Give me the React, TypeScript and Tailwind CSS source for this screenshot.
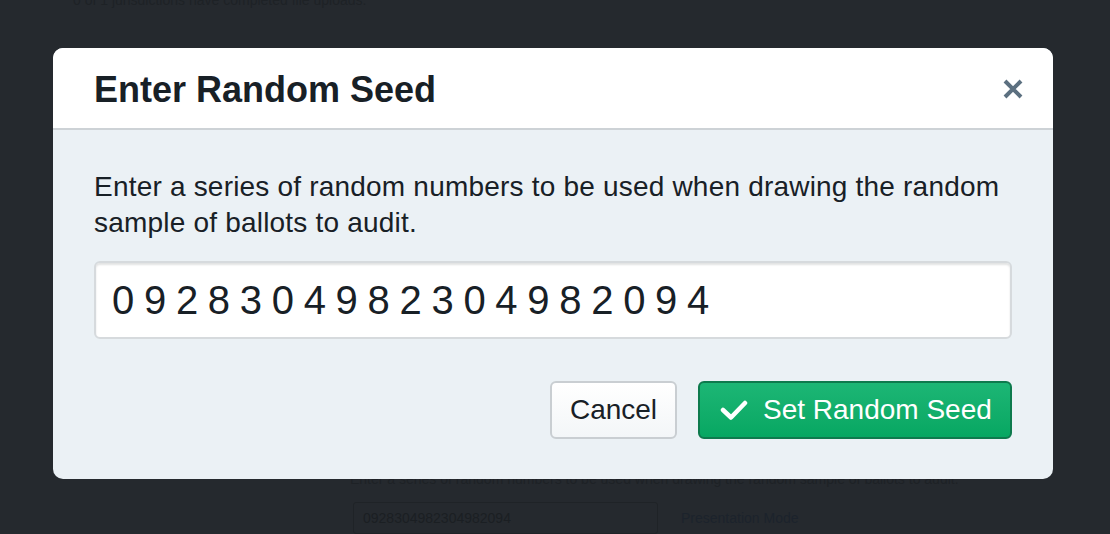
import React from "react";

const font = { fontFamily: '"Liberation Sans", Arial, Helvetica, sans-serif' };

export default function App() {
  return (
    <div
      className="relative w-[1110px] h-[534px] overflow-hidden bg-[#25292e]"
      style={font}
    >
      {/* page behind the overlay */}
      <div className="flex flex-col h-full text-[14px] leading-[18px] text-[#1e2226]">
        <div className="-mt-[9px] pl-[73px]">
          0 of 1 jurisdictions have completed file uploads.
        </div>
        <div className="mt-[461px] pl-[350px]">
          <div>
            Enter a series of random numbers to be used when drawing the random
            sample of ballots to audit.
          </div>
          <div className="mt-[14px] ml-[3px] flex items-center gap-[23px]">
            <div className="w-[305px] h-[32px] border border-[#1f2327] rounded-[3px] pl-[9px] flex items-center text-[#1b1f23]">
              0928304982304982094
            </div>
            <div className="text-[#1c232c]">Presentation Mode</div>
          </div>
        </div>
      </div>

      {/* dialog */}
      <div className="absolute left-[53px] top-[48px] w-[1000px] rounded-[10px] overflow-hidden bg-[#ebf1f5] flex flex-col">
        <div className="h-[82px] bg-white border-b-2 border-[#cdd2d6] flex items-center justify-between pl-[41px] pr-[30px]">
          <div className="text-[36px] font-bold text-[#182026] leading-none pt-[4px]">
            Enter Random Seed
          </div>
          <svg width="20" height="20" viewBox="0 0 20 20" className="mt-[2px]">
            <path
              d="M2 2 L18 18 M18 2 L2 18"
              stroke="#5c7080"
              strokeWidth="4"
              strokeLinecap="butt"
            />
          </svg>
        </div>
        <div className="pt-[39px] px-[41px] pb-[40px] flex flex-col">
          <p className="text-[28px] leading-[36px] tracking-[0.2px] text-[#182026]">
            Enter a series of random numbers to be used when drawing the random
            sample of ballots to audit.
          </p>
          <div className="mt-[20px] h-[78px] bg-white border-2 border-[#d6dadd] rounded-[6px] shadow-[inset_0_2px_2px_rgba(16,22,26,0.12)] flex items-center pl-[16px] text-[40px] tracking-[9.7px] text-[#182026]">
            0928304982304982094
          </div>
          <div className="mt-[42px] flex justify-end gap-[21px]">
            <button className="w-[127px] h-[58px] rounded-[6px] border-2 border-[#c9ced2] bg-gradient-to-b from-white to-[#f3f6f8] text-[28px] text-[#182026] flex items-center justify-center">
              Cancel
            </button>
            <button className="w-[314px] h-[58px] rounded-[6px] border-2 border-[#0e7a4d] bg-gradient-to-b from-[#1cb675] to-[#06a762] text-[28px] text-white flex items-center pl-[20px] gap-[15px]">
              <svg width="28" height="20" viewBox="0 0 28 20">
                <path
                  d="M3 10 L11 17.5 L25 3"
                  fill="none"
                  stroke="white"
                  strokeWidth="4.5"
                  strokeLinecap="round"
                  strokeLinejoin="round"
                />
              </svg>
              <span>Set Random Seed</span>
            </button>
          </div>
        </div>
      </div>
    </div>
  );
}
